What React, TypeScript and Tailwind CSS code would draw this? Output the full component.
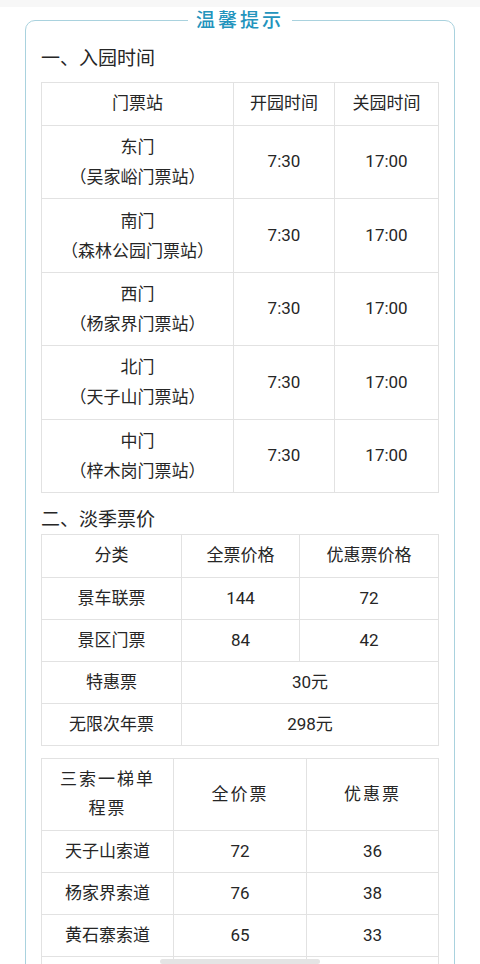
const gates = [
  { name: "东门", station: "（吴家峪门票站）" },
  { name: "南门", station: "（森林公园门票站）" },
  { name: "西门", station: "（杨家界门票站）" },
  { name: "北门", station: "（天子山门票站）" },
  { name: "中门", station: "（梓木岗门票站）" },
]

const cableways = [
  { name: "天子山索道", full: "72", half: "36" },
  { name: "杨家界索道", full: "76", half: "38" },
  { name: "黄石寨索道", full: "65", half: "33" },
]

const cell = "border border-[#e2e2e2] text-center align-middle"

export default function App() {
  return (
    <div className="relative min-h-[964px] bg-white text-[#262626] font-['Roboto','Noto_Sans_CJK_SC',sans-serif]">
      <div className="h-[7px] bg-[#f7f7f7]" />

      {/* card */}
      <div className="mx-[25px] mt-[13px] rounded-[10px] border border-[#a9d2de] px-[15px] pb-4 pt-[24px] relative">
        <div className="absolute left-0 right-0 -top-[13px] flex justify-center">
          <span className="bg-white px-[8px] text-[19px] leading-[26px] tracking-[3px] font-medium text-[#2394bd]">温馨提示</span>
        </div>

        {/* 1 */}
        <h2 className="text-[19px] leading-[28px] mb-[9px]">一、入园时间</h2>
        <table className="w-full table-fixed border-collapse text-[17px]">
          <colgroup>
            <col className="w-[192px]" />
            <col className="w-[101px]" />
            <col />
          </colgroup>
          <thead>
            <tr className="h-[43px]">
              <th className={cell + " font-normal"}>门票站</th>
              <th className={cell + " font-normal"}>开园时间</th>
              <th className={cell + " font-normal"}>关园时间</th>
            </tr>
          </thead>
          <tbody>
            {gates.map((g) => (
              <tr key={g.name} className="h-[73.4px]">
                <td className={cell + " leading-[30px]"}>
                  {g.name}
                  <br />
                  {g.station}
                </td>
                <td className={cell}>7:30</td>
                <td className={cell}>17:00</td>
              </tr>
            ))}
          </tbody>
        </table>

        {/* 2 */}
        <h2 className="text-[19px] leading-[28px] mt-[13px]">二、淡季票价</h2>
        <table className="w-full table-fixed border-collapse text-[17px]">
          <colgroup>
            <col className="w-[140px]" />
            <col className="w-[118px]" />
            <col />
          </colgroup>
          <thead>
            <tr className="h-[43px]">
              <th className={cell + " font-normal"}>分类</th>
              <th className={cell + " font-normal"}>全票价格</th>
              <th className={cell + " font-normal"}>优惠票价格</th>
            </tr>
          </thead>
          <tbody>
            <tr className="h-[42px]">
              <td className={cell}>景车联票</td>
              <td className={cell}>144</td>
              <td className={cell}>72</td>
            </tr>
            <tr className="h-[42px]">
              <td className={cell}>景区门票</td>
              <td className={cell}>84</td>
              <td className={cell}>42</td>
            </tr>
            <tr className="h-[42px]">
              <td className={cell}>特惠票</td>
              <td className={cell} colSpan={2}>30元</td>
            </tr>
            <tr className="h-[42px]">
              <td className={cell}>无限次年票</td>
              <td className={cell} colSpan={2}>298元</td>
            </tr>
          </tbody>
        </table>

        {/* 3 */}
        <table className="mt-[12px] w-full table-fixed border-collapse text-[17px]">
          <colgroup>
            <col className="w-[132px]" />
            <col className="w-[133px]" />
            <col />
          </colgroup>
          <thead>
            <tr className="h-[72px]">
              <th className={cell + " font-normal leading-[29px] tracking-[2px]"}>
                三索一梯单
                <br />
                程票
              </th>
              <th className={cell + " font-normal tracking-[2px]"}>全价票</th>
              <th className={cell + " font-normal tracking-[2px]"}>优惠票</th>
            </tr>
          </thead>
          <tbody>
            {cableways.map((c) => (
              <tr key={c.name} className="h-[42px]">
                <td className={cell}>{c.name}</td>
                <td className={cell}>{c.full}</td>
                <td className={cell}>{c.half}</td>
              </tr>
            ))}
            {/* next row is below the fold */}
            <tr className="h-[42px]">
              <td className={cell}></td>
              <td className={cell}></td>
              <td className={cell}></td>
            </tr>
          </tbody>
        </table>
      </div>

      {/* scroll indicator */}
      <div className="fixed top-[959px] left-[160px] w-[160px] h-[5px] rounded-full bg-[#e4e4e4]" />
    </div>
  )
}
